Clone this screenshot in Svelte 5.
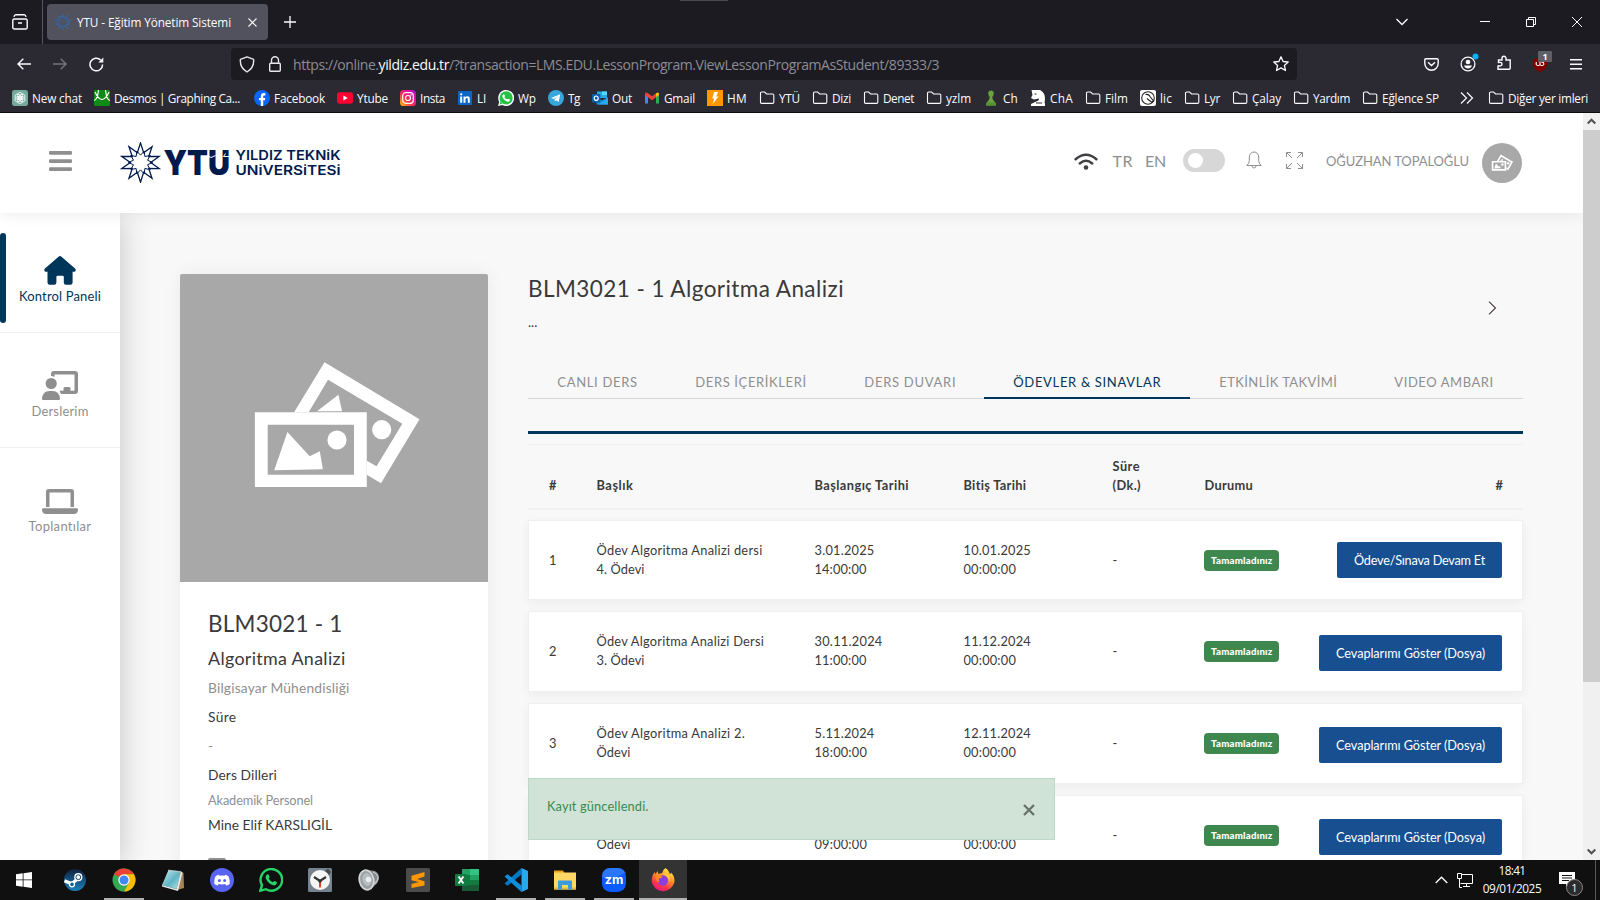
<script>
  // Spreads the letters of a label so that it takes the given width.
  function fit(node, width) {
    const apply = (w) => {
      node.style.letterSpacing = '0px';
      const natural = node.getBoundingClientRect().width;
      const n = [...node.textContent].length;
      if (n > 1) node.style.letterSpacing = `${(w - natural) / n}px`;
    };
    apply(width);
    return { update: apply };
  }

  const bookmarks = [
    ['gpt', 'New chat', 50],
    ['desmos', 'Desmos | Graphing Ca...', 126],
    ['facebook', 'Facebook', 51],
    ['youtube', 'Ytube', 31],
    ['insta', 'Insta', 25],
    ['linkedin', 'LI', 9],
    ['whatsapp', 'Wp', 18],
    ['telegram', 'Tg', 12],
    ['outlook', 'Out', 20],
    ['gmail', 'Gmail', 31],
    ['hm', 'HM', 20],
    ['folder', 'YTÜ', 21],
    ['folder', 'Dizi', 19],
    ['folder', 'Denet', 31],
    ['folder', 'yzlm', 25],
    ['pawn', 'Ch', 15],
    ['knight', 'ChA', 23],
    ['folder', 'Film', 23],
    ['lichess', 'lic', 12],
    ['folder', 'Lyr', 16],
    ['folder', 'Çalay', 29],
    ['folder', 'Yardım', 37],
    ['folder', 'Eğlence SP', 57]
  ];

  const tabs = [
    ['CANLI DERS', 80.5, 138],
    ['DERS İÇERİKLERİ', 111.5, 169],
    ['DERS DUVARI', 92, 149],
    ['ÖDEVLER & SINAVLAR', 148, 206],
    ['ETKİNLİK TAKVİMİ', 118, 175],
    ['VIDEO AMBARI', 99.5, 158]
  ];

  const rows = [
    { no: '1', title: [['Ödev Algoritma Analizi dersi', 166], ['4. Ödevi', 48]], start: [['3.01.2025', 60], ['14:00:00', 52]], end: [['10.01.2025', 67.5], ['00:00:00', 52.5]], action: ['Ödeve/Sınava Devam Et', 131] },
    { no: '2', title: [['Ödev Algoritma Analizi Dersi', 167.5], ['3. Ödevi', 48]], start: [['30.11.2024', 68], ['11:00:00', 52]], end: [['11.12.2024', 67.5], ['00:00:00', 52.5]], action: ['Cevaplarımı Göster (Dosya)', 149] },
    { no: '3', title: [['Ödev Algoritma Analizi 2.', 148.5], ['Ödevi', 34]], start: [['5.11.2024', 60], ['18:00:00', 52.5]], end: [['12.11.2024', 67.5], ['00:00:00', 52.5]], action: ['Cevaplarımı Göster (Dosya)', 149] },
    { no: '', title: [['\u00a0', 4], ['Ödevi', 34]], start: [['\u00a0', 4], ['09:00:00', 52.5]], end: [['\u00a0', 4], ['00:00:00', 52.5]], action: ['Cevaplarımı Göster (Dosya)', 149] }
  ];

  const apps = [
    ['steam', false], ['chrome', true], ['notepad', false], ['discord', false], ['whatsapp', false],
    ['clock', false], ['speaker', false], ['sublime', false], ['excel', false], ['vscode', true],
    ['explorer', true], ['zoom', true], ['firefox', true]
  ];

  const star = Array.from({ length: 20 }, (_, i) => {
    const r = i % 2 ? 10.2 : 19.6;
    const a = (i * Math.PI) / 10 - Math.PI / 2;
    return `${(20.5 + r * Math.cos(a)).toFixed(2)},${(20.5 + r * Math.sin(a)).toFixed(2)}`;
  }).join(' ');
  const innerStar = Array.from({ length: 20 }, (_, i) => {
    const r = i % 2 ? 7.4 : 12;
    const a = (i * Math.PI) / 10 - Math.PI / 2 + Math.PI / 10;
    return `${(20.5 + r * Math.cos(a)).toFixed(2)},${(20.5 + r * Math.sin(a)).toFixed(2)}`;
  }).join(' ');
</script>

{#snippet pictures()}
  <path fill="#fff" fill-rule="evenodd" d="M254.9 412.3H366.8V487H254.9ZM267.7 424.7V474.7H354V424.7Z" />
  <path fill="#fff" d="M274.2 470.3 287.4 432 309.7 456.3 319.8 451.3 322.9 469.3Z" />
  <circle fill="#fff" cx="337" cy="440" r="9.6" />
  <path fill="#fff" d="M324.5 362.3 419.5 419.3 381 483.3 366.8 474.7V460.7L376.6 466.3 402.3 423.7 328 379.7 308.7 412.3H294.1Z" />
  <path fill="#fff" d="M317 411.3 338.4 394.7 342 411.3Z" />
  <circle fill="#fff" cx="381.7" cy="429.7" r="9.6" />
{/snippet}

{#snippet favicon(name)}
  <svg width="16" height="16" viewBox="0 0 16 16">
    {#if name === 'folder'}
      <path d="M1.5 12.2V3.2Q1.5 2 2.7 2H5.6L7.6 4H13.6Q14.8 4 14.8 5.2V12.2Q14.8 13.4 13.6 13.4H2.7Q1.5 13.4 1.5 12.2Z" fill="none" stroke="#fbfbfe" stroke-width="1.1" />
    {:else if name === 'gpt'}
      <rect width="16" height="16" rx="2.5" fill="#74aa9c" />
      <g fill="none" stroke="#fff" stroke-width=".8">
        <ellipse cx="8" cy="5.8" rx="2.6" ry="3.4" />
        <ellipse cx="8" cy="5.8" rx="2.6" ry="3.4" transform="rotate(60 8 8)" />
        <ellipse cx="8" cy="5.8" rx="2.6" ry="3.4" transform="rotate(120 8 8)" />
        <ellipse cx="8" cy="5.8" rx="2.6" ry="3.4" transform="rotate(180 8 8)" />
        <ellipse cx="8" cy="5.8" rx="2.6" ry="3.4" transform="rotate(240 8 8)" />
        <ellipse cx="8" cy="5.8" rx="2.6" ry="3.4" transform="rotate(300 8 8)" />
      </g>
    {:else if name === 'desmos'}
      <rect width="16" height="16" rx="1" fill="#0e8a16" />
      <path d="M0 10.5Q3.500 10 4.500 0M1 2Q4.500 9.500 8 9.500T15 2M11.500 0Q12.500 10 16 10.500" fill="none" stroke="#fff" stroke-width="1.200" />
    {:else if name === 'facebook'}
      <circle cx="8" cy="8" r="8" fill="#0866ff" />
      <path d="M6.8 16V10.3H4.9V7.9H6.8V6.6C6.8 4.2 8 3.1 10 3.1Q10.9 3.1 11.4 3.3V5.4H10.4C9.4 5.4 9.2 5.9 9.2 6.8V7.9H11.3L10.9 10.3H9.2V16Z" fill="#fff" />
    {:else if name === 'youtube'}
      <rect y="2.3" width="16" height="11.4" rx="2.6" fill="#ff0033" />
      <path d="M6.4 5.6 10.7 8 6.4 10.4Z" fill="#fff" />
    {:else if name === 'insta'}
      <defs><linearGradient id="ig" x1="0" y1="1" x2="1" y2="0"><stop offset="0" stop-color="#ffc800" /><stop offset=".4" stop-color="#ff2d55" /><stop offset=".7" stop-color="#e1119b" /><stop offset="1" stop-color="#a307e0" /></linearGradient></defs>
      <rect width="16" height="16" rx="3.6" fill="url(#ig)" />
      <rect x="2.7" y="2.7" width="10.6" height="10.6" rx="3" fill="none" stroke="#fff" stroke-width="1.2" />
      <circle cx="8" cy="8" r="2.5" fill="none" stroke="#fff" stroke-width="1.2" /><circle cx="11" cy="5" r=".7" fill="#fff" />
    {:else if name === 'linkedin'}
      <rect x="1" y="1" width="14" height="14" rx="1" fill="#0a66c2" />
      <path d="M3.2 6.4H5.2V12.8H3.2ZM6.5 6.4H8.4V7.3Q9 6.2 10.4 6.2C12.4 6.2 12.8 7.5 12.8 9.2V12.8H10.8V9.6C10.8 8.7 10.7 7.9 9.7 7.9S8.5 8.7 8.5 9.6V12.8H6.5Z" fill="#fff" /><circle cx="4.2" cy="4.3" r="1.15" fill="#fff" />
    {:else if name === 'whatsapp'}
      <path d="M0 16 1.2 11.9A8 8 0 1 1 4.3 15Z" fill="#fff" /><circle cx="8.1" cy="7.9" r="6.6" fill="#25c144" /><path d="M1.6 14.4 2.4 11.5 4.5 13.6Z" fill="#25c144" />
      <path d="M5.2 4.5Q6.2 3.8 6.6 5L7 6Q7 6.5 6.4 7C7 8.3 8.1 9.1 9.1 9.5L9.9 8.7Q10.2 8.6 11.9 9.5C12 11 11 11.8 10 11.7C7.5 11.5 4.6 8.8 4.3 6.3Q4.3 5.2 5.2 4.5" fill="#fff" />
    {:else if name === 'telegram'}
      <circle cx="8" cy="8" r="8" fill="#35a6de" /><path d="M3 7.9 12.2 4.2 10.7 11.9 8.2 10.2 6.9 11.4 6.6 9.2 10.6 5.9 5.8 8.9Z" fill="#fff" />
    {:else if name === 'outlook'}
      <path d="M5 1.5H15V8H5Z" fill="#28a8ea" /><path d="M10 1.5H15V5H10Z" fill="#50d9ff" /><path d="M4.5 7 10 10.4 16 7V14.5H4.5Z" fill="#1490df" /><path d="M6 14.5 16 8V14.5Z" fill="#28a8ea" />
      <rect y="4" width="8.4" height="8.4" rx=".8" fill="#0f5ea8" /><ellipse cx="4.2" cy="8.2" rx="2" ry="2.2" fill="none" stroke="#fff" stroke-width="1.2" />
    {:else if name === 'gmail'}
      <path d="M1 3.5V13.5H4V7Z" fill="#4285f4" /><path d="M15 3.5V13.5H12V7Z" fill="#34a853" /><path d="M1 5V3.6Q1.6 1.6 3.6 2.9L8 6.2 12 3.2V7.2L8 10.2 1 5Z" fill="#ea4335" /><path d="M12 3.2Q14.6 1.4 15 4V5L12 7.2Z" fill="#fbbc04" />
    {:else if name === 'hm'}
      <rect width="16" height="16" fill="#ff9800" /><path d="M7.2 2H11L9.2 6.4H11.6L5.6 14 7.2 8.6H5.2Z" fill="#fff" />
    {:else if name === 'pawn'}
      <path d="M8 .4A2.8 2.8 0 0 1 10 5.2L11 6.2H9.3C9.4 9 10.3 10.6 12.2 12.4Q13.4 13.6 13 15.6H3Q2.6 13.6 3.8 12.4C5.7 10.6 6.6 9 6.7 6.2H5L6 5.2A2.8 2.8 0 0 1 8 .4Z" fill="#69a33f" /><path d="M3 15.6Q2.6 13.6 3.8 12.4H12.2Q13.4 13.6 13 15.6Z" fill="#569033" />
    {:else if name === 'knight'}
      <path d="M1.500 0H10Q15 2.500 15 9L14.500 13H15V16H1V14L5 12Q9.500 10.500 9 8.500L4 9.500 1 8 2.500 5Z" fill="#fff" /><path d="M4.500 4H6.500M6 13H12" stroke="#2b2a33" stroke-width="1.200" />
    {:else if name === 'lichess'}
      <rect width="16" height="16" rx="2" fill="#fff" /><circle cx="8" cy="8" r="6.300" fill="none" stroke="#222" stroke-width="1.100" /><path d="M5.500 4.500Q9 4 10 6.500L13.500 11 12 12.500 7 8.500" fill="none" stroke="#222" stroke-width="1.100" />
    {/if}
  </svg>
{/snippet}

{#snippet appIcon(name)}
  <svg width="24" height="24" viewBox="0 0 24 24">
    {#if name === 'steam'}
      <defs><linearGradient id="st" x1="0" y1="0" x2="0" y2="1"><stop offset="0" stop-color="#10203f" /><stop offset="1" stop-color="#1a83bd" /></linearGradient></defs>
      <circle cx="12" cy="12" r="11" fill="url(#st)" /><path d="M1.500 12.800 8.500 15.800 14 11.500" fill="none" stroke="#fff" stroke-width="3.200" />
      <circle cx="15.300" cy="9.200" r="4.100" fill="#fff" /><circle cx="15.300" cy="9.200" r="2.400" fill="#fff" stroke="#16436f" /><circle cx="9" cy="16.300" r="2.500" fill="#16639a" stroke="#fff" stroke-width="1.300" />
    {:else if name === 'chrome'}
      <circle cx="12" cy="12" r="11.500" fill="#34a853" /><path d="M12 12 2 6.200A11.500 11.500 0 0 1 22 6.300H12Z" fill="#ea4335" /><path d="M12 6.300H22A11.500 11.500 0 0 1 12 23.500L17 14.800Z" fill="#fbbc05" />
      <circle cx="12" cy="12" r="5.700" fill="#fff" /><circle cx="12" cy="12" r="4.500" fill="#4285f4" />
    {:else if name === 'notepad'}
      <defs><linearGradient id="np" x1="0" y1="0" x2="1" y2="1"><stop offset="0" stop-color="#c9eef5" /><stop offset=".55" stop-color="#5fb4c4" /><stop offset="1" stop-color="#bde7ee" /></linearGradient></defs>
      <path d="M19 3 22.500 5 23 20 16 22Z" fill="#a98455" /><path d="M7.500 2 20 3.500 15.500 21 1 17Z" fill="url(#np)" /><path d="M1 17 15.500 21 20 3.500 21.500 4.500 17 23 1 18.500Z" fill="#e6e9ea" /><path d="M7.500 2.300 20 3.700" stroke="#d9d9d9" stroke-width="1.500" stroke-dasharray="1 1" />
    {:else if name === 'discord'}
      <circle cx="12" cy="12" r="12" fill="#5865f2" /><path d="M8.800 6.700 7.900 6.900Q5.700 7.500 5.600 8.300C4.500 10.600 4 13.500 4.400 16Q5.800 17.200 7.800 17.500L8.800 16Q12 16.900 15.200 16L16.200 17.500Q18.200 17.200 19.600 16C20 13.500 19.500 10.600 18.400 8.300Q17.500 7.300 15.200 6.700L14.600 7.700Q12 7.300 9.400 7.700Z" fill="#fff" /><circle cx="9.400" cy="12.600" r="1.500" fill="#5865f2" /><circle cx="14.600" cy="12.600" r="1.500" fill="#5865f2" />
    {:else if name === 'whatsapp'}
      <path d="M1.300 22.700 3 17.200A10.800 10.800 0 1 1 7 21.200Z" fill="#101010" stroke="#25d366" stroke-width="2.400" /><path d="M8 6.500Q9.500 5.800 10 7.500L10.500 9Q10.500 9.700 9.700 10.500C10.700 12.300 12.200 13.500 13.800 14.200L15 12.900Q15.500 12.700 18 14.200C18 16.200 16.500 17.500 15 17.400C11.500 17.200 7 13 6.600 9.300Q6.500 7.500 8 6.500" fill="#25d366" />
    {:else if name === 'clock'}
      <rect width="24" height="24" rx="1.500" fill="#76838e" /><path d="M17 3 20 .5 23 4 21 7Z" fill="#444b50" /><circle cx="12" cy="12" r="10" fill="#f4f5f5" /><path d="M6 9 12 13 18 9" fill="none" stroke="#333" stroke-width="2.200" /><path d="M12 13V19.500" stroke="#d8431b" stroke-width="2" /><circle cx="12" cy="13" r="1.800" fill="#333" />
    {:else if name === 'speaker'}
      <path d="M11 2 18 3Q22 5 22 10 21.500 15 17 18L12 22Z" fill="#85898b" /><path d="M16 4Q21 6 21 10 20.500 14 17 16" fill="none" stroke="#c5c9cb" stroke-width="1.200" /><ellipse cx="9.500" cy="12" rx="8" ry="10.800" transform="rotate(-12 9.500 12)" fill="#d3d6d8" /><ellipse cx="9.500" cy="12" rx="6.300" ry="9" transform="rotate(-12 9.500 12)" fill="#9ba0a3" /><ellipse cx="10" cy="11.500" rx="4.500" ry="6.500" transform="rotate(-12 10 11.500)" fill="#b7bcbf" /><circle cx="11.500" cy="11.500" r="2.800" fill="#e9ebec" />
    {:else if name === 'sublime'}
      <rect width="24" height="24" rx="1.500" fill="#4b4b4b" /><path d="M18.500 4V8.500L11 11 18.500 13.300V17.500L5.500 20V16L13 13.900 5.500 12.200V7.800Z" fill="#ff9800" />
    {:else if name === 'excel'}
      <path d="M7 1H15V7H7Z" fill="#21a366" /><path d="M15 1H24V7H15Z" fill="#33c481" /><path d="M7 7H15V17H7Z" fill="#107c41" /><path d="M15 7H24V12H15Z" fill="#21a366" /><path d="M15 12H24V17H15Z" fill="#107c41" /><path d="M7 17H24V23H7Z" fill="#185c37" /><rect y="6" width="12" height="12" rx="1" fill="#107c41" /><path d="M3.600 8.500 8.400 15.500M8.400 8.500 3.600 15.500" stroke="#fff" stroke-width="1.900" />
    {:else if name === 'vscode'}
      <path d="M17.500 0V6.500L3.500 17.800.5 15.500Z" fill="#0078c8" /><path d="M17.500 24V17.500L3.500 6.200.5 8.500Z" fill="#0f8edb" /><path d="M17.500 0 24 3V21L17.500 24Z" fill="#27a9f2" />
    {:else if name === 'explorer'}
      <path d="M1 2.500H10L11.500 5H1Z" fill="#e8a317" /><path d="M1 4.500H23V21.500H1Z" fill="#ffd766" /><path d="M1 19.500H23V21.500H1Z" fill="#e7b63b" /><path d="M5 13.500Q5 12.500 6 12.500H18Q19 12.500 19 13.500V21.500H15V17H9V21.500H5Z" fill="#3c9be0" />
    {:else if name === 'zoom'}
      <rect width="24" height="24" rx="8.500" fill="#0b5cff" /><path d="M0 9Q8 14 24 4V8.500Q24 0 15.500 0H8.500Q0 0 0 8.500Z" fill="#4087fc" opacity=".6" /><text x="2.800" y="15.600" textLength="18.400" lengthAdjust="spacingAndGlyphs" font-family="Inter, sans-serif" font-size="12" font-weight="700" fill="#fff">zm</text>
    {:else if name === 'firefox'}
      <defs><linearGradient id="ff" x1=".8" y1="0" x2=".3" y2="1"><stop offset="0" stop-color="#fff44f" /><stop offset=".4" stop-color="#ff9a2b" /><stop offset=".75" stop-color="#ff3647" /><stop offset="1" stop-color="#e31587" /></linearGradient></defs>
      <path d="M14.500 0C18 2.500 18 4.500 19 6Q20 5.500 20 4.500C23 7.500 24 11 23.300 14.500A11.600 11.600 0 0 1 .7 13.800C.4 10 1.800 6.500 3.500 4L4.500 6.200 6.500 3 7.500 6Q9 5 11 5.200 11.500 2 14.500 0Z" fill="url(#ff)" /><circle cx="11.800" cy="12.500" r="5.200" fill="#8a3ee0" /><path d="M4.500 7.500Q8 6.300 11.500 8.800 10.500 10.500 8 10.600 7 12.500 8.500 14.500 4.500 13.500 4.500 7.500" fill="#ff8a1e" /><path d="M12 5C18 5 20 10 18 14.500 18.500 9 15 8 12 5" fill="#ffd43a" />
    {/if}
  </svg>
{/snippet}

<div class="screen">
  <div class="tabbar">
    <div class="view">
      <svg width="16" height="16" viewBox="0 0 16 16" fill="none" stroke="#fbfbfe" stroke-width="1.400"><rect x=".8" y="5" width="14.400" height="10" rx="1.600" /><path d="M2 2.800Q2.300.8 4 .8H12Q13.700.8 14 2.800M6 9H10" /></svg>
    </div>
    <div class="tab">
      <svg width="16" height="16" viewBox="0 0 41 41"><polygon points={star} fill="#32588d" opacity=".35" /><polygon points={star} fill="none" stroke="#3569ac" stroke-width="3" stroke-dasharray="7 2" opacity=".8" /><circle cx="20.500" cy="20.500" r="7" fill="#52525e" /></svg>
      <span class="tab-title"><span use:fit={154}>YTU - Eğitim Yönetim Sistemi</span></span>
      <svg width="9" height="9" viewBox="0 0 9 9" stroke="#fbfbfe" stroke-width="1.100"><path d="M.5.5 8.500 8.500M8.500.5.5 8.500" /></svg>
    </div>
    <svg class="plus" width="12" height="12" viewBox="0 0 12 12" stroke="#fbfbfe" stroke-width="1.300"><path d="M6 0V12M0 6H12" /></svg>
    <div class="window-controls">
      <svg width="12" height="8" viewBox="0 0 12 8" fill="none" stroke="#fbfbfe" stroke-width="1.300"><path d="M.5 1 6 6.500 11.500 1" /></svg>
      <svg width="10" height="10" viewBox="0 0 10 10"><path d="M0 4H10V5H0Z" fill="#fff" /></svg>
      <svg width="10" height="10" viewBox="0 0 10 10" fill="none" stroke="#fff"><path d="M.5 2.500H7.500V9.500H.5ZM2.500 2V.5H9.500V7.500H8" /></svg>
      <svg width="10" height="10" viewBox="0 0 10 10" stroke="#fff"><path d="M0 0 10 10M10 0 0 10" /></svg>
    </div>
    <i class="drag"></i>
  </div>

  <div class="navbar">
    <div class="nav-buttons">
      <svg width="14" height="12" viewBox="0 0 14 12" fill="none" stroke="#fbfbfe" stroke-width="1.400"><path d="M14 6H1M6.300.7 1 6 6.300 11.300" /></svg>
      <svg width="14" height="12" viewBox="0 0 14 12" fill="none" stroke="#75747c" stroke-width="1.400"><path d="M0 6H13M7.700.7 13 6 7.700 11.300" /></svg>
      <svg width="15" height="15" viewBox="0 0 15 15" fill="none" stroke="#fbfbfe" stroke-width="1.500"><path d="M13.600 7.500A6.300 6.300 0 1 1 11.600 2.900" /><path d="M14.300.5V5.500H9.300Z" fill="#fbfbfe" stroke="none" /></svg>
    </div>
    <div class="urlbar">
      <svg width="16" height="17" viewBox="0 0 16 17" fill="none" stroke="#e6e6ea" stroke-width="1.400"><path d="M8 .8 14.600 3.300Q15.400 11.500 8 16 .6 11.500 1.400 3.300Z" stroke-linejoin="round" /></svg>
      <svg class="lock" width="12" height="16" viewBox="0 0 12 16" fill="none" stroke="#e6e6ea" stroke-width="1.400"><rect x=".7" y="7.200" width="10.600" height="8" rx="1" /><path d="M2.500 7V4.200A3.500 3.500 0 0 1 9.500 4.200V7" /></svg>
      <span class="url" use:fit={646}>https://online.<b>yildiz.edu.tr</b>/?transaction=LMS.EDU.LessonProgram.ViewLessonProgramAsStudent/89333/3</span>
      <svg class="fav" width="16" height="16" viewBox="0 0 16 16" fill="none" stroke="#fbfbfe" stroke-width="1.300" stroke-linejoin="round"><path d="M8 .8 10.100 5.500 15.200 6 11.400 9.400 12.500 14.500 8 11.900 3.500 14.500 4.600 9.400.8 6 5.900 5.500Z" /></svg>
    </div>
    <div class="tools">
      <svg width="15" height="13" viewBox="0 0 15 13" fill="none" stroke="#fbfbfe" stroke-width="1.400"><path d="M2 .8H13Q14.200.8 14.200 2V5.500A6.700 6.700 0 0 1 .8 5.500V2Q.8.8 2 .8ZM4 4.300 7.500 7.500 11 4.300" /></svg>
      <svg width="22" height="20" viewBox="0 0 22 20"><circle cx="11" cy="11" r="6.900" fill="none" stroke="#fbfbfe" stroke-width="1.300" /><circle cx="11" cy="9" r="2.300" fill="#fbfbfe" /><path d="M7 12.500H15Q14 15.500 11 15.500T7 12.500Z" fill="#fbfbfe" /><circle cx="18.500" cy="3.500" r="3" fill="#00b3f4" /></svg>
      <svg width="14" height="16" viewBox="0 0 14 16" fill="none" stroke="#fbfbfe" stroke-width="1.400"><path d="M1 10.500V14.200H12.200Q13.200 14.200 13.200 13.200V5H9V3.300A2 2 0 0 0 5 3.300V5H1.500V7.500Q5 7 5 9.200T1 10.800" /></svg>
      <div class="ublock">
        <svg width="14" height="15" viewBox="0 0 14 15"><path d="M7 0Q10 2 14 2V7Q14 12 7 15 0 12 0 7V2Q4 2 7 0Z" fill="#800000" /><path d="M3.200 5V7.500Q5.200 10 7 7.500V5M7 7.500Q9 10 10.800 7.500 11 4.500 8.500 5.500" fill="none" stroke="#fff" stroke-width="1.100" /></svg>
        <span class="count">1</span>
      </div>
      <svg width="12" height="11" viewBox="0 0 12 11"><path d="M0 0H12V1.400H0ZM0 4.500H12V5.900H0ZM0 9H12V10.400H0Z" fill="#fbfbfe" /></svg>
    </div>
  </div>

  <div class="bookmarks">
    {#each bookmarks as [icon, label, w]}
      <div class="bookmark" class:wide={icon === 'desmos'}>{@render favicon(icon)}<span class="label" style:width="{w}px"><span use:fit={w}>{label}</span></span></div>
    {/each}
    <div class="more">
      <svg width="14" height="12" viewBox="0 0 14 12" fill="none" stroke="#fbfbfe" stroke-width="1.200"><path d="M1 .5 6.500 6 1 11.500M7 .5 12.500 6 7 11.500" /></svg>
      <div class="bookmark">{@render favicon('folder')}<span class="label"><span use:fit={80}>Diğer yer imleri</span></span></div>
    </div>
  </div>

  <div class="page">
    <div class="site">
      <header>
        <svg class="burger" width="23" height="20" viewBox="0 0 23 20" fill="#8f8f8f"><rect width="23" height="3.700" rx="1.200" /><rect y="8.200" width="23" height="3.700" rx="1.200" /><rect y="16.300" width="23" height="3.700" rx="1.200" /></svg>
        <svg class="logo" width="222" height="41" viewBox="0 0 222 41" fill="#001a4d">
          <polygon points={star} fill="none" stroke="#001a4d" stroke-width="1.300" />
          <polygon points={innerStar} fill="none" stroke="#001a4d" stroke-width="1" />
          <text class="logo-big" x="43.500" y="33.300" textLength="66.500" lengthAdjust="spacingAndGlyphs">YTU</text>
          <path d="M87 13.500 91 15.500 95.500 13.500M110 14.500H103.500L105.500 11.500" fill="none" stroke="#fff" stroke-width="1" />
          <text class="logo-small" x="115.500" y="18.200" textLength="105" lengthAdjust="spacingAndGlyphs">YILDIZ TEKNiK</text>
          <text class="logo-small" x="115.500" y="33" textLength="105" lengthAdjust="spacingAndGlyphs">UNiVERSiTESi</text>
        </svg>
        <div class="header-tools">
          <svg width="24" height="17" viewBox="0 0 24 17" fill="none" stroke="#404145" stroke-width="2.500" stroke-linecap="round"><path d="M1.600 6.300Q12-2.800 22.400 6.300M5.800 10.500Q12 5 18.200 10.500" /><circle cx="12" cy="14.500" r="2.300" fill="#404145" stroke="none" /></svg>
          <span class="lang tr" use:fit={20.500}>TR</span>
          <span class="lang en" use:fit={21}>EN</span>
          <span class="toggle"><i></i></span>
          <svg class="bell" width="16" height="18" viewBox="0 0 16 18" fill="none" stroke="#8f8f8f"><path d="M.8 14.500Q3.300 12.500 3.300 9.500V6A4.700 5 0 0 1 12.700 6V9.500Q12.700 12.500 15.200 14.500ZM6 15Q6.300 17 8 17T10 15" /></svg>
          <svg class="expand" width="17" height="17" viewBox="0 0 17 17" fill="none" stroke="#8f8f8f"><path d="M.5 5V.5H5M.5.5 6 6M12 .5H16.500V5M16.500.5 11 6M.5 12V16.500H5M.5 16.500 6 11M16.500 12V16.500H12M16.500 16.500 11 11" /></svg>
          <span class="user" use:fit={143}>OĞUZHAN TOPALOĞLU</span>
        </div>
        <svg class="avatar" width="40" height="40" viewBox="180 274 308 308">{@render pictures()}</svg>
      </header>

      <div class="body">
        <nav>
          <a class="active" href="#panel">
            <svg width="32" height="29" viewBox="0 0 32 29" fill="#003659"><path d="M14.500.7Q16-.5 17.500.7L31.300 12.800Q32.600 15.200 30.300 15.800H28.600V26.500Q28.600 28.700 26.400 28.700H22Q19.800 28.700 19.800 26.500V21Q19.800 19.800 18.600 19.800H13.500Q12.400 19.800 12.400 21V26.500Q12.400 28.700 10.200 28.700H5.700Q3.500 28.700 3.500 26.500V15.800H1.700Q-.6 15.200.7 12.800Z" /></svg>
            <span use:fit={82}>Kontrol Paneli</span>
          </a>
          <a href="#derslerim">
            <svg width="36" height="29" viewBox="0 0 36 29"><path fill="#8f8f8f" d="M9 5V3Q9 0 12 0H33Q36 0 36 3V20Q36 23 33 23H19L17.500 19.800H21.500V17.500Q21.500 16 23 16H27Q28.500 16 28.500 17.500V19.800H32.500V3.500H12.500V6Q11 5 9 5Z" /><circle cx="9.200" cy="12.500" r="5.600" fill="#8f8f8f" /><path fill="#8f8f8f" d="M0 28Q.5 20 7.500 20H10.500Q17.500 20 18 28 18 29 17 29H1Q0 29 0 28Z" /></svg>
            <span use:fit={57}>Derslerim</span>
          </a>
          <a href="#toplantilar">
            <svg width="36" height="25" viewBox="0 0 36 25" fill="#8f8f8f"><path fill-rule="evenodd" d="M4 18V3Q4 0 7 0H29Q32 0 32 3V18H28.500V3.600H7.500V18ZM0 20.500Q0 19.300 1.200 19.300H34.800Q36 19.300 36 20.500 36 25 31.500 25H4.500Q0 25 0 20.500Z" /></svg>
            <span use:fit={63}>Toplantılar</span>
          </a>
        </nav>

        <main>
          <aside class="card">
            <svg class="cover" width="308" height="308" viewBox="180 274 308 308">{@render pictures()}</svg>
            <div class="card-text">
              <h2><span use:fit={134.500}>BLM3021 - 1</span></h2>
              <h3><span use:fit={137.500}>Algoritma Analizi</span></h3>
              <p class="muted dept"><span use:fit={141.500}>Bilgisayar Mühendisliği</span></p>
              <p><span use:fit={28.500}>Süre</span></p>
              <p class="muted">-</p>
              <p><span use:fit={69}>Ders Dilleri</span></p>
              <p class="muted staff"><span use:fit={105}>Akademik Personel</span></p>
              <p class="person"><span use:fit={124}>Mine Elif KARSLIGİL</span></p>
              <i class="stub"></i>
            </div>
          </aside>

          <section>
            <div class="head">
              <div>
                <h1><span use:fit={316}>BLM3021 - 1 Algoritma Analizi</span></h1>
                <p class="dots">...</p>
              </div>
              <svg width="9" height="14" viewBox="0 0 9 14" fill="none" stroke="#4a3a34" stroke-width="1.100"><path d="M1 .7 7.500 7 1 13.300" /></svg>
            </div>
            <div class="tabs">
              {#each tabs as [label, w, total], i}
                <div class="tab-item" class:current={i === 3} style:width="{total}px"><span use:fit={w}>{label}</span></div>
              {/each}
            </div>
            <div class="rule"></div>
            <div class="grid thead">
              <span class="num">#</span>
              <span><span use:fit={37}>Başlık</span></span>
              <span><span use:fit={94.500}>Başlangıç Tarihi</span></span>
              <span><span use:fit={63}>Bitiş Tarihi</span></span>
              <span><span use:fit={27.500}>Süre</span><br /><span use:fit={28.500}>(Dk.)</span></span>
              <span><span use:fit={48.500}>Durumu</span></span>
              <span class="right">#</span>
            </div>
            {#each rows as row, i}
              <div class="grid row" class:first={i === 0}>
                <span class="num">{row.no}</span>
                {#each [row.title, row.start, row.end] as cell}
                  <span class="cell">{#each cell as [t, w]}<span class="line"><span use:fit={w}>{t}</span></span>{/each}</span>
                {/each}
                <span class="dash">-</span>
                <span class="status"><span class="badge"><span use:fit={61.500}>Tamamladınız</span></span></span>
                <span class="right"><button><span use:fit={row.action[1]}>{row.action[0]}</span></button></span>
              </div>
            {/each}
          </section>
        </main>
      </div>

      <div class="toast">
        <span class="message" use:fit={101.500}>Kayıt güncellendi.</span>
        <svg width="12" height="12" viewBox="0 0 12 12" stroke="#68716b" stroke-width="2.300"><path d="M1 1 11 11M11 1 1 11" /></svg>
      </div>
    </div>

    <div class="scrollbar">
      <div class="arrow"><svg width="9" height="7" viewBox="0 0 9 7" fill="none" stroke="#505050" stroke-width="2"><path d="M.7 5.500 4.500 1.700 8.300 5.500" /></svg></div>
      <div class="thumb"></div>
      <div class="arrow last"><svg width="9" height="7" viewBox="0 0 9 7" fill="none" stroke="#505050" stroke-width="2"><path d="M.7 1.500 4.500 5.300 8.300 1.500" /></svg></div>
    </div>
  </div>

  <div class="taskbar">
    <div class="start"><svg width="16" height="16" viewBox="0 0 16 16" fill="#fff"><path d="M0 2.200 6.700 1.300V7.500H0ZM7.500 1.200 16 0V7.500H7.500ZM0 8.300H6.700V14.700L0 13.800ZM7.500 8.300H16V16L7.500 14.800Z" /></svg></div>
    {#each apps as [name, running]}
      <div class="app" class:running class:focused={name === 'firefox'}>{@render appIcon(name)}</div>
    {/each}
    <div class="tray">
      <svg width="13" height="8" viewBox="0 0 13 8" fill="none" stroke="#fff" stroke-width="1.300"><path d="M.7 7 6.500 1.200 12.300 7" /></svg>
      <svg class="net" width="16" height="15" viewBox="0 0 16 15" fill="none" stroke="#fff"><path d="M5 1.500H15.500V10.500H3.500M9.500 10.500V13.500M6 13.500H13M.5.5H4.500V5.500H.5ZM2.500 5.500V14.500H5" /></svg>
      <div class="time"><span use:fit={27}>18:41</span><span use:fit={58.500}>09/01/2025</span></div>
      <div class="notice">
        <svg width="16" height="16" viewBox="0 0 16 16"><path d="M0 0H16V12H10L7 15.500V12H0Z" fill="#fff" /><path d="M3 3.500H13M3 6H13M3 8.500H10" stroke="#101010" /></svg>
        <span class="notice-count">1</span>
      </div>
      <i class="peek"></i>
    </div>
  </div>
</div>

<style>
  :global(body) { margin: 0; overflow: hidden; background: #101010; }
  .screen { width: 1600px; height: 900px; overflow: hidden; display: flex; flex-direction: column; font-family: 'Open Sans', 'Noto Sans', sans-serif; color: #fbfbfe; }
  .screen * { box-sizing: border-box; }
  svg { display: block; flex: none; }
  span { white-space: nowrap; }
  p, h1, h2, h3 { margin: 0; font-weight: 400; }

  .tabbar { position: relative; height: 44px; flex: none; background: #1c1b22; display: flex; align-items: center; }
  .view { width: 43px; height: 44px; border-right: 1px solid #56555d; display: flex; align-items: center; padding-left: 12px; }
  .tab { width: 221px; height: 36px; margin-left: 4px; border-radius: 4px; background: #52525e; display: flex; align-items: center; padding-left: 8px; font-size: 11.800px; }
  .tab-title { margin-left: 6px; width: 155px; margin-right: 15.500px; }
  .plus { margin-left: 15.500px; }
  .window-controls { margin-left: auto; display: flex; align-items: center; padding-right: 18px; }
  .window-controls svg:nth-child(2) { margin-left: 72px; }
  .window-controls svg:nth-child(3), .window-controls svg:nth-child(4) { margin-left: 36px; }
  .drag { position: absolute; left: 680px; top: 0; width: 48px; height: 1px; background: #4a4950; }

  .navbar { height: 40px; flex: none; background: #2b2a33; display: flex; align-items: center; }
  .nav-buttons { width: 231px; display: flex; align-items: center; gap: 22px; padding-left: 17px; }
  .urlbar { width: 1066px; height: 32px; border-radius: 4px; background: #1c1b22; display: flex; align-items: center; padding: 0 8px; }
  .lock { margin: 0 12px 1px 14px; }
  .url { flex: none; font-size: 14px; padding-top: 1px; color: #8d8c94; }
  .url b { font-weight: 400; color: #fbfbfe; }
  .fav { margin-left: auto; }
  .tools { margin-left: auto; display: flex; align-items: center; padding-right: 18px; }
  .tools > :nth-child(2) { margin: 0 18px 3px 18px; }
  .tools > :nth-child(3) { margin-bottom: 2px; }
  .ublock { position: relative; margin: 0 23px 0 22px; }
  .count { position: absolute; left: 5px; top: -6px; width: 14px; height: 11px; background: #5f5f66; border-radius: 1px; font: 700 9px/11px 'Open Sans', sans-serif; text-align: center; }

  .bookmarks { height: 29px; flex: none; background: #2b2a33; border-bottom: 1px solid #0c0c0d; display: flex; align-items: center; gap: 12px; padding: 0 12px 0 12px; font-size: 11.800px; }
  .bookmark { display: flex; align-items: center; gap: 4px; }
  .wide { padding-right: 2px; }
  .label { display: block; line-height: 16px; }
  .more { display: flex; align-items: center; gap: 14px; margin-left: auto; }

  .page { height: 747px; flex: none; display: flex; font-family: Lato, sans-serif; color: #3a3a3a; }
  .site { position: relative; width: 1583px; height: 747px; overflow: hidden; background: #f8f8f8; }
  header { position: relative; z-index: 3; height: 100px; background: #fff; box-shadow: 0 2px 14px rgba(0, 0, 0, .07); display: flex; align-items: center; }
  .burger { margin: 0 0 4px 49px; }
  .logo { margin: 0 0 1px 48px; }
  .logo-big { font: 900 33.500px Inter, sans-serif; }
  .logo-small { font: 600 13.200px Inter, sans-serif; }
  .header-tools { margin-left: auto; display: flex; align-items: center; padding-bottom: 4px; color: #8f8f8f; }
  .lang { flex: none; font-size: 16px; line-height: 20px; }
  .tr { margin-left: 15px; }
  .en { margin-left: 12px; }
  .toggle { margin: 0 0 1px 17px; width: 42px; height: 23px; border-radius: 12px; background: #d7d7d7; padding: 4px 5px; }
  .toggle i { display: block; width: 15px; height: 15px; border-radius: 50%; background: #fff; }
  .bell { margin: 0 24px 2px 21px; }
  .expand { margin-bottom: 1px; }
  .user { flex: none; margin-left: 23px; font-size: 13px; }
  .avatar { margin: 0 61px 0 13px; border-radius: 50%; background: #a8a8a8; }

  .body { display: flex; height: 647px; }
  nav { position: relative; z-index: 2; width: 120px; flex: none; background: #fff; box-shadow: 0 4px 30px rgba(0, 0, 0, .22); padding-top: 5px; }
  nav a { height: 115px; display: flex; flex-direction: column; align-items: center; border-bottom: 1px solid #f0f0f0; text-decoration: none; color: #8f8f8f; font-size: 13px; line-height: 18px; padding-top: 38px; }
  nav a:last-child { border: 0; padding-top: 41px; }
  nav a span { margin-top: 2px; }
  nav a:last-child span { margin-top: 3px; }
  nav .active { position: relative; color: #003659; }
  .active::before { content: ''; position: absolute; left: 0; top: 15px; width: 6px; height: 90px; border-radius: 3px; background: #003659; }

  main { display: flex; padding: 59.500px 0 0 60px; }
  .card { width: 308px; height: 700px; margin-top: 1.500px; flex: none; background: #fff; border-radius: 2px; box-shadow: 0 0 20px rgba(0, 0, 0, .06); }
  .cover { background: #a8a8a8; border-radius: 2px 2px 0 0; }
  .card-text { padding: 28px 0 0 28px; }
  h2 { font-size: 22.500px; line-height: 28px; }
  h3 { font-size: 17.900px; line-height: 24px; margin: 8px 0 7.500px; }
  .card-text p { font-size: 13.800px; line-height: 20px; margin-bottom: 9px; }
  .muted { color: #8f8f8f; }
  .card-text .muted.staff { font-size: 12.800px; margin: -3.500px 0 5px; }
  .stub { display: block; width: 18px; height: 8px; margin-top: 23px; border-radius: 2px; background: #8f8f8f; }

  section { width: 995px; margin-left: 40px; flex: none; }
  .head { display: flex; justify-content: space-between; padding-right: 26px; height: 98.500px; }
  .head svg { margin-top: 28px; }
  h1 { font-size: 22.500px; line-height: 31px; }
  .dots { font-size: 13px; line-height: 20px; margin-top: 8px; }
  .tabs { display: flex; height: 28px; border-bottom: 1px solid #d6d6d6; color: #8f8f8f; font-size: 13px; line-height: 22px; }
  .tab-item { height: 28px; padding-left: 29.300px; flex: none; }
  .current { color: #003659; border-bottom: 2px solid #003659; }
  .rule { height: 3px; margin-top: 32px; background: #003659; }
  .grid { display: grid; grid-template-columns: 48.500px 218px 149px 149px 92px 1fr auto; padding: 0 20px; align-items: center; font-size: 12.800px; line-height: 19px; }
  .thead { height: 66px; margin-top: 10px; border-top: 1px solid #efefef; border-bottom: 2px solid #f1f1f1; padding-bottom: 13px; align-items: end; font-weight: 700; }
  .num { padding-left: 1px; }
  .right { text-align: right; }
  .row { height: 81.500px; margin-top: 10.500px; background: #fff; border: 1px solid #f0f0f0; box-shadow: 0 3px 10px rgba(0, 0, 0, .05); padding: 0 20px 0 19px; }
  .row.first { height: 80px; margin-top: 10px; }
  .row .num, .dash { padding-top: 1px; }
  .line { display: block; }
  .status { display: flex; margin-left: -.5px; }
  .badge { width: 75px; height: 21px; border-radius: 4px; background: #3e884f; color: #fff; font-size: 9.700px; font-weight: 900; line-height: 20px; padding-left: 7px; }
  button { display: block; height: 36px; padding: 0 17px; margin: 4px 0 0; border: 0; border-radius: 2px; background: #184f90; color: #fff; font: 12.700px/34px Lato, sans-serif; }
  .first button { margin-top: 0; }

  .toast { position: absolute; z-index: 4; left: 528px; top: 665px; width: 527px; height: 62px; background: #d1e2d6; border: 1px solid #bdd9c5; display: flex; align-items: center; justify-content: space-between; padding: 2px 19px 0 18px; color: #388b50; font-size: 12.800px; }
  .message { flex: none; padding-bottom: 8px; }

  .scrollbar { width: 17px; background: #f0f0f0; display: flex; flex-direction: column; }
  .arrow { height: 17px; display: flex; align-items: center; justify-content: center; padding-bottom: 1px; }
  .thumb { height: 552px; background: #cdcdcd; }
  .last { margin-top: auto; }

  .taskbar { height: 40px; flex: none; background: #101010; display: flex; gap: 1px; }
  .start { width: 50px; display: flex; align-items: center; padding-left: 16px; }
  .app { width: 48px; display: flex; align-items: center; justify-content: center; }
  .running { background: linear-gradient(#b0b0b0, #b0b0b0) center bottom / 40px 2px no-repeat; }
  .focused { background: linear-gradient(#b0b0b0, #b0b0b0) center bottom / 48px 2px no-repeat #333; }
  .tray { margin-left: auto; display: flex; align-items: center; }
  .net { margin: 0 9px 0 9px; }
  .time { width: 60px; display: flex; flex-direction: column; align-items: center; font-size: 11.800px; line-height: 18px; padding-bottom: 2px; }
  .notice { position: relative; margin: 0 20px 0 17px; }
  .notice-count { position: absolute; left: 7px; top: 7px; width: 17px; height: 17px; border-radius: 50%; border: 1px solid #888; background: #2b2b2b; font-size: 11px; line-height: 15px; text-align: center; }
  .peek { width: 1px; height: 40px; background: #5a5a5a; margin-right: 4px; }
</style>
